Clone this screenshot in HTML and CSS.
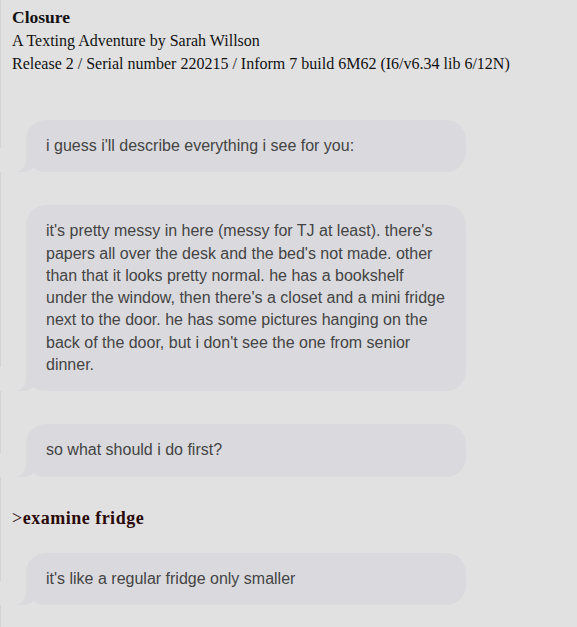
FILE: index.html
```html
<!DOCTYPE html>
<html>
<head>
<meta charset="utf-8">
<link rel="stylesheet" href="styles.css">
</head>
<body>
<div class="page">
  <header class="banner">
    <div class="title">Closure</div>
    <div class="line">A Texting Adventure by Sarah Willson</div>
    <div class="line">Release 2 / Serial number 220215 / Inform 7 build 6M62 (I6/v6.34 lib 6/12N)</div>
  </header>
  <div class="bubble b1">i guess i'll describe everything i see for you:</div>
  <div class="bubble b2">it's pretty messy in here (messy for TJ at least). there's papers all over the desk and the bed's not made. other than that it looks pretty normal. he has a bookshelf under the window, then there's a closet and a mini fridge next to the door. he has some pictures hanging on the back of the door, but i don't see the one from senior dinner.</div>
  <div class="bubble b3">so what should i do first?</div>
  <div class="command"><span class="prompt">&gt;</span>examine fridge</div>
  <div class="bubble b4">it's like a regular fridge only smaller</div>
</div>
</body>
</html>
```

FILE: styles.css
```css
html, body {
  margin: 0;
  padding: 0;
  background: #e1e1e1;
}
.page {
  min-height: 627px;
  box-sizing: border-box;
  border-left: 1px solid #d3d3d3;
  padding: 6px 0 0 11px;
  font-family: "Liberation Serif", serif;
  color: #111;
}
.banner {
  font-size: 16px;
  line-height: 23px;
}
.title {
  font-size: 17.5px;
  font-weight: bold;
}
.bubble {
  position: relative;
  width: 400px;
  margin-left: 14px;
  padding: 15px 20px;
  background: #dadade;
  border-radius: 20px;
  font-family: "Liberation Sans", Arial, sans-serif;
  font-size: 16px;
  line-height: 22.3px;
  color: #444;
}
.bubble::before {
  content: "";
  position: absolute;
  bottom: 0;
  left: -12px;
  width: 26px;
  height: 22px;
  background: #dadade;
  border-bottom-right-radius: 18px 16px;
}
.bubble::after {
  content: "";
  position: absolute;
  bottom: 0;
  left: -26px;
  width: 26px;
  height: 24px;
  background: #e1e1e1;
  border-bottom-right-radius: 12px;
}
.b1 { margin-top: 45px; }
.b2 { margin-top: 33px; }
.b3 { margin-top: 33px; }
.command {
  margin-top: 30px;
  font-size: 18px;
  letter-spacing: 0.5px;
  line-height: 23px;
  font-weight: bold;
  color: #2a0a0a;
}
.prompt {
  font-weight: normal;
}
.b4 { margin-top: 23px; }
```
